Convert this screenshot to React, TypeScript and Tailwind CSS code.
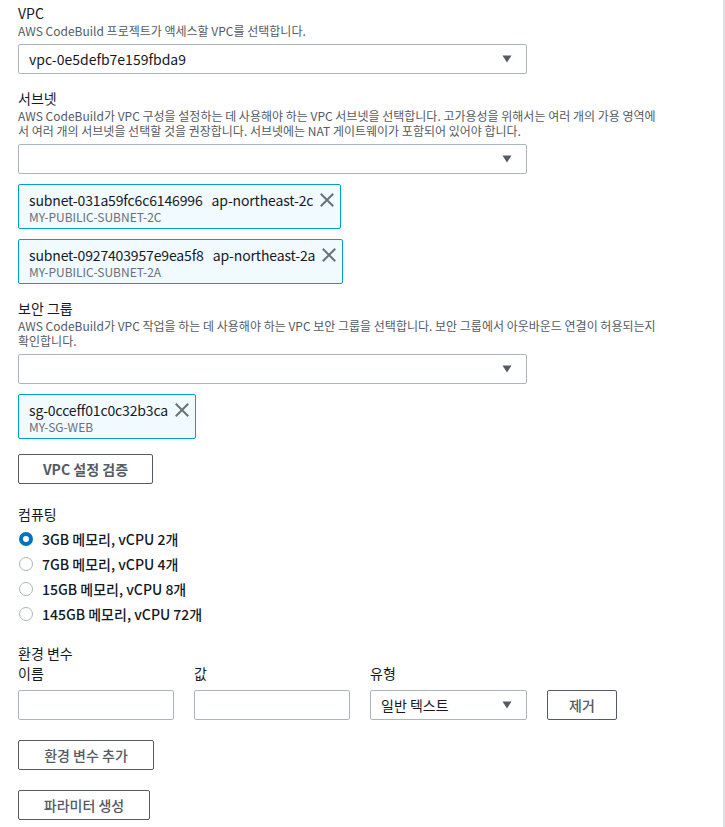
import React from "react";

const FONT = { fontFamily: '"Noto Sans CJK KR", "Noto Sans", sans-serif' };

function Caret() {
  return (
    <svg width="10" height="8" viewBox="0 0 10 8" className="shrink-0">
      <path d="M0.5 0.5 L9.5 0.5 L5 7.5 Z" fill="#545b64" />
    </svg>
  );
}

function XIcon() {
  return (
    <svg width="14" height="14" viewBox="0 0 14 14" className="shrink-0">
      <path d="M1.5 1.5 L12.5 12.5 M12.5 1.5 L1.5 12.5" stroke="#687078" strokeWidth="2" strokeLinecap="square" />
    </svg>
  );
}

function Select({ value, className = "w-[509px]" }: { value?: string; className?: string }) {
  return (
    <div className={`flex h-[30px] items-center justify-between rounded-[2px] border border-[#aab7b8] bg-white pl-[10px] pr-[14px] ${className}`}>
      <span className="text-[14px] leading-[20px] text-[#16191f]">{value ?? ""}</span>
      <Caret />
    </div>
  );
}

function Chip({ id, az, name }: { id: string; az?: string; name: string }) {
  return (
    <div className="flex w-fit items-start rounded-[2px] border border-[#00a1c9] bg-[#f1faff] pb-[4px] pl-[10px] pr-[6px] pt-[5px]">
      <div className="flex flex-col">
        <div className="flex text-[14px] leading-[20px] tracking-[-0.15px] text-[#16191f]">
          <span>{id}</span>
          {az && <span className="ml-[9px]">{az}</span>}
        </div>
        <div className="text-[12px] leading-[14px] text-[#687078]">{name}</div>
      </div>
      <div className="ml-[7px] mt-[3px]">
        <XIcon />
      </div>
    </div>
  );
}

function Button({ children, className = "" }: { children: React.ReactNode; className?: string }) {
  return (
    <div
      className={`flex h-[30px] items-center justify-center rounded-[2px] border border-[#545b64] bg-white text-[14px] leading-[20px] text-[#545b64] ${className}`}
    >
      {children}
    </div>
  );
}

function Radio({ checked, label }: { checked?: boolean; label: string }) {
  return (
    <div className="flex h-[25px] items-center">
      {checked ? (
        <div className="ml-[1px] h-[14px] w-[14px] rounded-full border-[4px] border-[#0073bb] bg-white" />
      ) : (
        <div className="ml-[1px] h-[14px] w-[14px] rounded-full border border-[#aab7b8] bg-white" />
      )}
      <span className="ml-[9px] text-[14px] font-medium leading-[20px] text-[#16191f]">{label}</span>
    </div>
  );
}

export default function App() {
  return (
    <div style={FONT} className="min-h-[827px] w-[725px] bg-white">
      <div className="min-h-[827px] w-[725px] border-r-2 border-[#dde1e3] pl-[18px] pt-[3px]">
        {/* VPC */}
        <div className="text-[14px] leading-[20px] text-[#16191f]">VPC</div>
        <div className="text-[12px] leading-[16px] text-[#545b64]">AWS CodeBuild 프로젝트가 액세스할 VPC를 선택합니다.</div>
        <div className="mt-[5px]">
          <Select value="vpc-0e5defb7e159fbda9" />
        </div>

        {/* Subnet */}
        <div className="mt-[14px] text-[14px] leading-[20px] text-[#16191f]">서브넷</div>
        <div className="text-[12px] leading-[15px] text-[#545b64]">
          <div className="whitespace-nowrap">AWS CodeBuild가 VPC 구성을 설정하는 데 사용해야 하는 VPC 서브넷을 선택합니다. 고가용성을 위해서는 여러 개의 가용 영역에</div>
          <div className="whitespace-nowrap">서 여러 개의 서브넷을 선택할 것을 권장합니다. 서브넷에는 NAT 게이트웨이가 포함되어 있어야 합니다.</div>
        </div>
        <div className="mt-[6px]">
          <Select />
        </div>
        <div className="mt-[10px] flex flex-col gap-[10px]">
          <Chip id="subnet-031a59fc6c6146996" az="ap-northeast-2c" name="MY-PUBILIC-SUBNET-2C" />
          <Chip id="subnet-0927403957e9ea5f8" az="ap-northeast-2a" name="MY-PUBILIC-SUBNET-2A" />
        </div>

        {/* Security group */}
        <div className="mt-[14px] text-[14px] leading-[20px] text-[#16191f]">보안 그룹</div>
        <div className="text-[12px] leading-[15px] text-[#545b64]">
          <div className="whitespace-nowrap">AWS CodeBuild가 VPC 작업을 하는 데 사용해야 하는 VPC 보안 그룹을 선택합니다. 보안 그룹에서 아웃바운드 연결이 허용되는지</div>
          <div className="whitespace-nowrap">확인합니다.</div>
        </div>
        <div className="mt-[6px]">
          <Select />
        </div>
        <div className="mt-[10px]">
          <Chip id="sg-0cceff01c0c32b3ca" name="MY-SG-WEB" />
        </div>
        <div className="mt-[15px]">
          <Button className="w-[135px] font-bold">VPC 설정 검증</Button>
        </div>

        {/* Compute */}
        <div className="mt-[20px] text-[14px] leading-[20px] text-[#16191f]">컴퓨팅</div>
        <div className="mt-[2px] flex flex-col">
          <Radio checked label="3GB 메모리, vCPU 2개" />
          <Radio label="7GB 메모리, vCPU 4개" />
          <Radio label="15GB 메모리, vCPU 8개" />
          <Radio label="145GB 메모리, vCPU 72개" />
        </div>

        {/* Env vars */}
        <div className="mt-[17px] text-[14px] leading-[20px] text-[#16191f]">환경 변수</div>
        <div className="flex gap-[20px] text-[14px] leading-[20px] text-[#16191f]">
          <div className="w-[156px]">이름</div>
          <div className="w-[156px]">값</div>
          <div className="w-[156px]">유형</div>
        </div>
        <div className="mt-[7px] flex items-center gap-[20px]">
          <div className="h-[30px] w-[156px] rounded-[2px] border border-[#aab7b8] bg-white" />
          <div className="h-[30px] w-[156px] rounded-[2px] border border-[#aab7b8] bg-white" />
          <Select value="일반 텍스트" className="w-[157px]" />
          <Button className="w-[70px] font-medium">제거</Button>
        </div>
        <div className="mt-[20px]">
          <Button className="w-[136px] font-medium">환경 변수 추가</Button>
        </div>
        <div className="mt-[20px]">
          <Button className="w-[132px] font-medium">파라미터 생성</Button>
        </div>
      </div>
    </div>
  );
}
